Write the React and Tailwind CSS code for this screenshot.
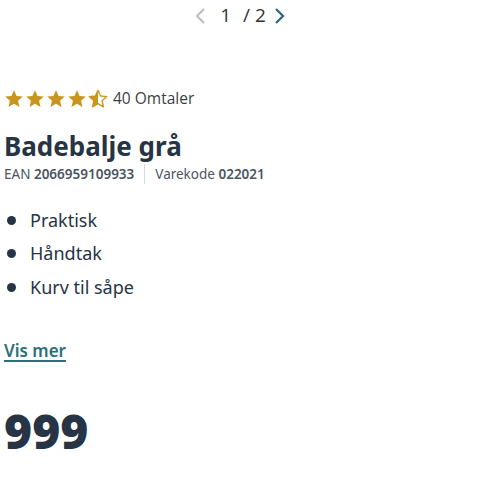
import React from "react";

const Star = ({ half }) => (
  <svg width="20" height="20" viewBox="0 0 24 24">
    {half ? (
      <>
        <defs>
          <clipPath id="lh">
            <rect x="0" y="0" width="12" height="24" />
          </clipPath>
        </defs>
        <path d="M12 1.5l3.1 6.9 7.4.7-5.6 5 1.7 7.4L12 17.6l-6.6 3.9 1.7-7.4-5.6-5 7.4-.7z" fill="none" stroke="#c8961e" strokeWidth="1.6" strokeLinejoin="round" />
        <path d="M12 1.5l3.1 6.9 7.4.7-5.6 5 1.7 7.4L12 17.6l-6.6 3.9 1.7-7.4-5.6-5 7.4-.7z" fill="#c8961e" clipPath="url(#lh)" />
      </>
    ) : (
      <path d="M12 1.5l3.1 6.9 7.4.7-5.6 5 1.7 7.4L12 17.6l-6.6 3.9 1.7-7.4-5.6-5 7.4-.7z" fill="#c8961e" />
    )}
  </svg>
);

export default function App() {
  return (
    <div className="w-[480px] h-[480px] bg-white text-[#263445] overflow-hidden" style={{ fontFamily: '"Noto Sans", sans-serif' }}>
      <div className="flex items-center justify-center h-[30px] pt-[1px] text-[19px]" style={{ fontFamily: '"Open Sans", sans-serif' }}>
        <svg width="14" height="20" viewBox="0 0 14 20" className="mr-[12px]">
          <path d="M10 3L3 10l7 7" fill="none" stroke="#b8bcc0" strokeWidth="2" />
        </svg>
        <span className="text-[#333]">1</span>
        <span className="ml-[12px] text-[#333]">/</span>
        <span className="ml-[5px] text-[#333]">2</span>
        <svg width="14" height="20" viewBox="0 0 14 20" className="ml-[6px]">
          <path d="M4 3l7 7-7 7" fill="none" stroke="#2d6f78" strokeWidth="2.4" />
        </svg>
      </div>

      <div className="px-[4px]">
        <div className="flex items-center mt-[58px] h-[22px]">
          <div className="flex gap-[1px]">
            <Star /><Star /><Star /><Star /><Star half />
          </div>
          <span className="ml-[5px] text-[15.5px] text-[#3a3f44]" style={{ fontFamily: '"Open Sans", sans-serif' }}>40 Omtaler</span>
        </div>

        <h1 className="mt-[19px] text-[26px] font-bold leading-[34px] text-[#263445]">Badebalje grå</h1>

        <div className="flex items-center text-[13.5px] text-[#4a5561] mt-[1px] leading-[20px]">
          <span>EAN <span className="font-semibold">2066959109933</span></span>
          <span className="mx-[10px] w-px h-[20px] bg-[#d7d9db]"></span>
          <span>Varekode <span className="font-semibold">022021</span></span>
        </div>

        <ul className="mt-[24px] flex flex-col gap-[9px] text-[18px]">
          {["Praktisk", "Håndtak", "Kurv til såpe"].map((t) => (
            <li key={t} className="flex items-center h-[24.5px]">
              <span className="w-[9px] h-[9px] rounded-full bg-[#263445] ml-[3px] mr-[14px]"></span>
              {t}
            </li>
          ))}
        </ul>

        <a className="inline-block mt-[38px] text-[17px] font-semibold text-[#2d6f78] underline underline-offset-[3px] decoration-[2px]" href="#">Vis mer</a>

        <div className="mt-[38px] text-[48px] font-black leading-[60px] text-[#263445]" style={{ fontFamily: '"Noto Sans", sans-serif' }}>999</div>
      </div>
    </div>
  );
}
